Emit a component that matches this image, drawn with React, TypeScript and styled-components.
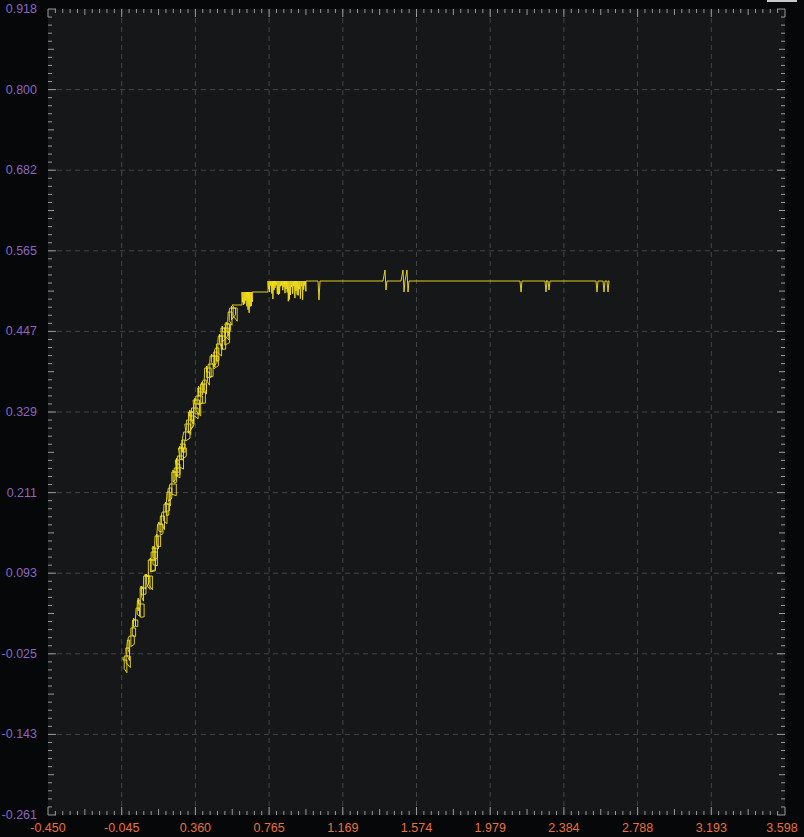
import React from "react";
import styled, { createGlobalStyle } from "styled-components";

const Global = createGlobalStyle`
  html, body { margin: 0; padding: 0; background: #050709; }
`;

const Frame = styled.div`
  width: 804px;
  height: 837px;
  background: #050709;
  position: relative;
  overflow: hidden;
  font-family: "Liberation Sans", Arial, sans-serif;
`;

const Chart = styled.svg`
  display: block;
`;

const TopBar = styled.div`
  position: absolute;
  top: 0;
  right: 7px;
  width: 30px;
  height: 2px;
  background: #c8c8c8;
`;

const L = 48, R = 785, T = 9, B = 815;
const xs = ["-0.450","-0.045","0.360","0.765","1.169","1.574","1.979","2.384","2.788","3.193","3.598"];
const ys = ["0.918","0.800","0.682","0.565","0.447","0.329","0.211","0.093","-0.025","-0.143","-0.261"];

function rng(seed: number) {
  let s = seed;
  return () => { s = (s * 1103515245 + 12345) & 0x7fffffff; return s / 0x7fffffff; };
}

function baseY(x: number) {
  if (x < 190) return 657 - (x - 123) * (247 / 67);
  return 410 - (x - 190) * (105 / 42);
}

function buildPath(): string {
  const r = rng(11);
  const pts: [number, number][] = [];
  let x = 123;
  pts.push([x, 657]);
  // rising part: dense box-like zigzag
  while (x < 232) {
    const by = baseY(x);
    const qy = Math.round((by + (r() - 0.5) * 10) / 4) * 4;
    const dx = 2 + r() * 5;
    pts.push([x, qy]);
    pts.push([x + dx, qy]);
    pts.push([x + dx, qy + 6 + r() * 8]);
    pts.push([x + dx * 0.3, qy + 6 + r() * 8]);
    pts.push([x + dx * 0.3, qy - 2]);
    x += 0.8 + r() * 1.2;
  }
  pts.push([232, 305]); pts.push([242, 305]);
  for (let px = 242; px < 252; px += 1.1) { pts.push([px, 292]); pts.push([px + 0.5, 300 + r() * 14]); }
  pts.push([252, 292]); pts.push([268, 292]);
  for (let px = 268; px < 306; px += 1.1) {
    pts.push([px, 281]); pts.push([px + 0.5, 285 + r() * 17]);
  }
  pts.push([306, 281]); pts.push([318, 281]); pts.push([319, 300]); pts.push([320, 281]);
  const spikes: [number, number, number][] = [[385, 270, 290], [403, 270, 292], [407, 270, 292], [520, 281, 292], [545, 281, 292], [548, 281, 290], [596, 281, 292], [603, 281, 292], [607, 281, 292]];
  for (const [sx, a, b] of spikes) {
    pts.push([sx - 2, 281]); pts.push([sx, a]); pts.push([sx + 1, b]); pts.push([sx + 2, 281]);
  }
  pts.push([608, 281]);
  return pts.map((p, i) => (i ? "L" : "M") + p[0].toFixed(1) + " " + p[1].toFixed(1)).join(" ");
}

export default function App() {
  const w = (R - L) / 10, h = (B - T) / 10;
  const ticks: React.ReactElement[] = [];
  for (let i = 0; i <= 100; i++) {
    const len = i % 10 === 0 ? 8 : i % 5 === 0 ? 6 : 4;
    const px = L + (i * w) / 10, py = T + (i * h) / 10;
    ticks.push(<line key={"t" + i} x1={px} y1={T} x2={px} y2={T + len} />);
    ticks.push(<line key={"b" + i} x1={px} y1={B} x2={px} y2={B - len} />);
    ticks.push(<line key={"l" + i} x1={L} y1={py} x2={L + len} y2={py} />);
    ticks.push(<line key={"r" + i} x1={R} y1={py} x2={R - len} y2={py} />);
  }
  return (
    <Frame>
      <Global />
      <TopBar />
      <Chart width={804} height={837}>
        <rect x={L} y={T} width={R - L} height={B - T} fill="#161719" />
        <g stroke="#444548" strokeDasharray="5 4" strokeWidth={1}>
          {Array.from({ length: 9 }, (_, i) => (
            <line key={"gv" + i} x1={L + (i + 1) * w} y1={T} x2={L + (i + 1) * w} y2={B} />
          ))}
          {Array.from({ length: 9 }, (_, i) => (
            <line key={"gh" + i} x1={L} y1={T + (i + 1) * h} x2={R} y2={T + (i + 1) * h} />
          ))}
        </g>
        <g stroke="#9a9a9a" strokeWidth={1}>{ticks}</g>
        <path d={buildPath()} fill="none" stroke="#f5e219" strokeWidth={0.9} />
        <g fill="#8c64c0" fontSize={12.5} fontFamily="Liberation Sans, Arial, sans-serif" textAnchor="end">
          {ys.map((t, i) => (
            <text key={t} x={37} y={T + i * h + 4}>{t}</text>
          ))}
        </g>
        <g fill="#e8703a" fontSize={12.5} fontFamily="Liberation Sans, Arial, sans-serif" textAnchor="middle">
          {xs.map((t, i) => (
            <text key={t} x={Math.min(L + i * w, 782)} y={832}>{t}</text>
          ))}
        </g>
      </Chart>
    </Frame>
  );
}
